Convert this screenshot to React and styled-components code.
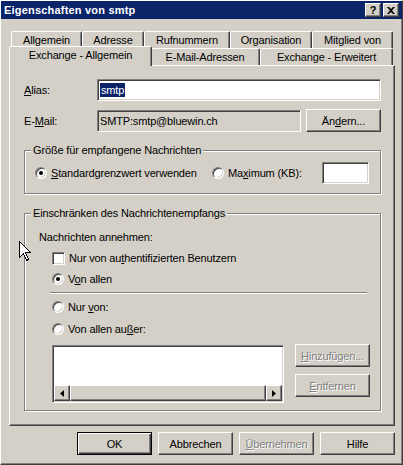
import React from "react";
import styled, { createGlobalStyle, css } from "styled-components";

const colors = {
  face: "#d4d0c8",
  light: "#ffffff",
  shadow: "#808080",
  dark: "#404040",
  title: "#0a246a",
  text: "#000000",
};

const backRow = [
  { label: "Allgemein", width: 71 },
  { label: "Adresse", width: 62 },
  { label: "Rufnummern", width: 86 },
  { label: "Organisation", width: 82 },
  { label: "Mitglied von", width: 81 },
];

const frontRow = [
  { label: "Exchange - Allgemein", width: 139, active: true },
  { label: "E-Mail-Adressen", width: 110 },
  { label: "Exchange - Erweitert", width: 133 },
];

const GlobalStyle = createGlobalStyle`
  html, body {
    margin: 0;
    padding: 0;
    background: ${colors.face};
  }
  body {
    font-family: "Liberation Sans", Arial, sans-serif;
    font-size: 11px;
    letter-spacing: -0.15px;
    color: ${colors.text};
  }
  * {
    box-sizing: border-box;
  }
`;

const raised = css`
  border: 1px solid;
  border-color: ${colors.light} ${colors.dark} ${colors.dark} ${colors.light};
  box-shadow: inset -1px -1px 0 ${colors.shadow};
`;

const sunken = css`
  border: 1px solid;
  border-color: ${colors.shadow} ${colors.light} ${colors.light} ${colors.shadow};
  box-shadow: inset 1px 1px 0 ${colors.dark}, inset -1px -1px 0 ${colors.face};
`;

const App = () => (
  <>
    <GlobalStyle />
    <Window>
      <TitleBar>
        <TitleText>Eigenschaften von smtp</TitleText>
        <CaptionButton>?</CaptionButton>
        <CaptionButton>
          <svg width="8" height="7" viewBox="0 0 8 7">
            <path d="M0 0 L2 0 L4 2 L6 0 L8 0 L5 3.5 L8 7 L6 7 L4 5 L2 7 L0 7 L3 3.5 Z" fill="#000" />
          </svg>
        </CaptionButton>
      </TitleBar>

      <Body>
        <TabStrip>
          <TabRow>
            {backRow.map((tab) => (
              <Tab key={tab.label} $width={tab.width}>
                {tab.label}
              </Tab>
            ))}
          </TabRow>
          <TabRow>
            {frontRow.map((tab) => (
              <Tab key={tab.label} $width={tab.width} $active={tab.active}>
                {tab.label}
              </Tab>
            ))}
          </TabRow>
        </TabStrip>

        <Panel>
          <FieldRow>
            <FieldLabel>
              <Key>A</Key>lias:
            </FieldLabel>
            <TextField $width={284}>
              <Selection>smtp</Selection>
            </TextField>
          </FieldRow>

          <FieldRow $top={8}>
            <FieldLabel>
              E-<Key>M</Key>ail:
            </FieldLabel>
            <TextField $width={204} $readOnly>
              SMTP:smtp@bluewin.ch
            </TextField>
            <Button $left={5}>
              Än<Key>d</Key>ern...
            </Button>
          </FieldRow>

          <GroupBox $height={44} $top={18}>
            <GroupTitle>Größe für empfangene Nachrichten</GroupTitle>
            <SizeRow>
              <Option $width={177}>
                <Radio $checked />
                <span>
                  <Key>S</Key>tandardgrenzwert verwenden
                </span>
              </Option>
              <Option $width={110}>
                <Radio />
                <span>
                  Ma<Key>x</Key>imum (KB):
                </span>
              </Option>
              <TextField $width={47} />
            </SizeRow>
          </GroupBox>

          <GroupBox $height={198} $top={19}>
            <GroupTitle>Einschränken des Nachrichtenempfangs</GroupTitle>
            <GroupBody>
              <Caption>Nachrichten annehmen:</Caption>
              <Indent>
                <Option $top={7}>
                  <Checkbox />
                  <span>
                    Nur von au<Key>t</Key>hentifizierten Benutzern
                  </span>
                </Option>
                <Option $top={7}>
                  <Radio $checked />
                  <span>
                    V<Key>o</Key>n allen
                  </span>
                </Option>
                <Separator />
                <Option $top={6}>
                  <Radio />
                  <span>
                    Nur <Key>v</Key>on:
                  </span>
                </Option>
                <Option $top={8}>
                  <Radio />
                  <span>
                    Von allen au<Key>ß</Key>er:
                  </span>
                </Option>
                <ListRow>
                  <ListBox>
                    <ListContent />
                    <ScrollBar>
                      <ScrollButton>
                        <svg width="4" height="7" viewBox="0 0 4 7">
                          <path d="M4 0 L0 3.5 L4 7 Z" fill="#000" />
                        </svg>
                      </ScrollButton>
                      <ScrollThumb />
                      <ScrollButton>
                        <svg width="4" height="7" viewBox="0 0 4 7">
                          <path d="M0 0 L4 3.5 L0 7 Z" fill="#000" />
                        </svg>
                      </ScrollButton>
                    </ScrollBar>
                  </ListBox>
                  <ListButtons>
                    <Button $disabled>
                      <Key>H</Key>inzufügen...
                    </Button>
                    <Button $disabled>
                      <Key>E</Key>ntfernen
                    </Button>
                  </ListButtons>
                </ListRow>
              </Indent>
            </GroupBody>
          </GroupBox>
        </Panel>

        <DialogButtons>
          <Button $default>OK</Button>
          <Button>Abbrechen</Button>
          <Button $disabled>
            <Key>Ü</Key>bernehmen
          </Button>
          <Button>Hilfe</Button>
        </DialogButtons>
      </Body>

      <Pointer width="13" height="21" viewBox="0 0 13 21">
        <path
          d="M0.5 0.5 L0.5 16.5 L4.5 12.5 L7.5 19.5 L9.5 18.5 L6.5 11.5 L11.5 11.5 Z"
          fill="#fff"
          stroke="#000"
          strokeWidth="1"
          shapeRendering="crispEdges"
        />
      </Pointer>
    </Window>
  </>
);

const Window = styled.div`
  position: relative;
  width: 403px;
  height: 465px;
  background: ${colors.face};
  ${raised};
`;

const TitleBar = styled.div`
  display: flex;
  align-items: center;
  gap: 2px;
  height: 18px;
  padding: 0 3px 0 3px;
  background: ${colors.title};
`;

const TitleText = styled.div`
  flex: 1;
  color: #fff;
  font-weight: bold;
  font-size: 11px;
  letter-spacing: 0.2px;
  white-space: nowrap;
`;

const CaptionButton = styled.div`
  width: 16px;
  height: 14px;
  display: flex;
  align-items: center;
  justify-content: center;
  background: ${colors.face};
  font-weight: bold;
  font-size: 11px;
  line-height: 12px;
  ${raised};
`;

const Body = styled.div`
  padding: 12px 0 0 8px;
`;

const TabStrip = styled.div`
  display: flex;
  flex-direction: column;
  padding-left: 2px;
`;

const TabRow = styled.div`
  display: flex;
  align-items: flex-end;
  height: 17px;
`;

const Tab = styled.div`
  width: ${(p) => p.$width}px;
  height: 17px;
  display: flex;
  align-items: center;
  justify-content: center;
  white-space: nowrap;
  background: ${colors.face};
  border: 1px solid;
  border-bottom: none;
  border-color: ${colors.light} ${colors.dark} transparent ${colors.light};
  border-radius: 2px 2px 0 0;
  box-shadow: inset -1px 0 0 ${colors.shadow};

  ${(p) =>
    p.$active &&
    css`
      position: relative;
      z-index: 1;
      width: ${p.$width + 4}px;
      height: 20px;
      margin: 0 -2px -1px;
      padding-bottom: 3px;
    `};
`;

const Panel = styled.div`
  width: 386px;
  height: 361px;
  display: flex;
  flex-direction: column;
  padding: 13px 0 0 14px;
  ${raised};
`;

const FieldRow = styled.div`
  display: flex;
  align-items: center;
  margin-top: ${(p) => p.$top || 0}px;
`;

const FieldLabel = styled.div`
  width: 73px;
`;

const TextField = styled.div`
  width: ${(p) => p.$width}px;
  height: 22px;
  display: flex;
  align-items: center;
  padding: 0 2px;
  white-space: nowrap;
  background: ${(p) => (p.$readOnly ? colors.face : "#fff")};
  ${sunken};
`;

const Selection = styled.span`
  background: ${colors.title};
  color: #fff;
  padding: 1px 1px;
`;

const Key = styled.u`
  text-decoration: underline;
  text-underline-offset: 1px;
`;

const Button = styled.div`
  width: 75px;
  height: 23px;
  flex-shrink: 0;
  display: flex;
  align-items: center;
  justify-content: center;
  margin-left: ${(p) => p.$left || 0}px;
  white-space: nowrap;
  background: ${colors.face};
  ${raised};

  ${(p) =>
    p.$disabled &&
    css`
      color: ${colors.shadow};
      text-shadow: 1px 1px 0 #fff;
    `};

  ${(p) =>
    p.$default &&
    css`
      border: 1px solid #000;
      box-shadow: inset 1px 1px 0 #fff, inset -1px -1px 0 ${colors.dark},
        inset -2px -2px 0 ${colors.shadow};
    `};
`;

const GroupBox = styled.div`
  width: 357px;
  height: ${(p) => p.$height}px;
  margin-top: ${(p) => p.$top}px;
  display: flex;
  flex-direction: column;
  align-items: flex-start;
  border: 1px solid ${colors.shadow};
  box-shadow: inset 1px 1px 0 #fff, 1px 1px 0 #fff;
`;

const GroupTitle = styled.div`
  margin: -8px 0 0 6px;
  padding: 0 2px;
  line-height: 14px;
  background: ${colors.face};
  white-space: nowrap;
`;

const SizeRow = styled.div`
  display: flex;
  align-items: center;
  height: 22px;
  margin-top: 5px;
  padding-left: 10px;
`;

const Option = styled.div`
  display: flex;
  align-items: center;
  gap: 4px;
  height: 14px;
  white-space: nowrap;
  width: ${(p) => (p.$width ? `${p.$width}px` : "auto")};
  margin-top: ${(p) => p.$top || 0}px;
`;

const Radio = styled.span`
  width: 12px;
  height: 12px;
  flex-shrink: 0;
  display: flex;
  align-items: center;
  justify-content: center;
  border-radius: 50%;
  background: #fff;
  border: 1px solid;
  border-color: ${colors.shadow} #fff #fff ${colors.shadow};
  box-shadow: inset 1px 1px 0 ${colors.dark}, inset -1px -1px 0 ${colors.face};

  &::after {
    content: "";
    display: ${(p) => (p.$checked ? "block" : "none")};
    width: 4px;
    height: 4px;
    border-radius: 50%;
    background: #000;
  }
`;

const Checkbox = styled.span`
  width: 13px;
  height: 13px;
  flex-shrink: 0;
  background: #fff;
  ${sunken};
`;

const GroupBody = styled.div`
  display: flex;
  flex-direction: column;
  padding-left: 14px;
`;

const Caption = styled.div`
  margin-top: 10px;
  line-height: 14px;
`;

const Indent = styled.div`
  display: flex;
  flex-direction: column;
  padding-left: 13px;
`;

const Separator = styled.div`
  width: 317px;
  height: 2px;
  margin: 6px 0 0 -2px;
  border-top: 1px solid ${colors.shadow};
  border-bottom: 1px solid #fff;
`;

const ListRow = styled.div`
  display: flex;
  align-items: flex-start;
  margin-top: 8px;
`;

const ListBox = styled.div`
  width: 232px;
  height: 58px;
  margin: 1px 11px 0 0;
  padding: 1px;
  display: flex;
  flex-direction: column;
  background: #fff;
  ${sunken};
`;

const ListContent = styled.div`
  flex: 1;
  background: #fff;
`;

const ScrollBar = styled.div`
  display: flex;
  height: 16px;
  background: ${colors.face};
`;

const ScrollButton = styled.div`
  width: 16px;
  height: 16px;
  display: flex;
  align-items: center;
  justify-content: center;
  background: ${colors.face};
  ${raised};
`;

const ScrollThumb = styled.div`
  flex: 1;
  background: ${colors.face};
  ${raised};
`;

const ListButtons = styled.div`
  display: flex;
  flex-direction: column;
  gap: 7px;
`;

const DialogButtons = styled.div`
  width: 386px;
  display: flex;
  justify-content: flex-end;
  gap: 6px;
  margin-top: 6px;
`;

const Pointer = styled.svg`
  position: absolute;
  left: 18px;
  top: 240px;
`;

export default App;
